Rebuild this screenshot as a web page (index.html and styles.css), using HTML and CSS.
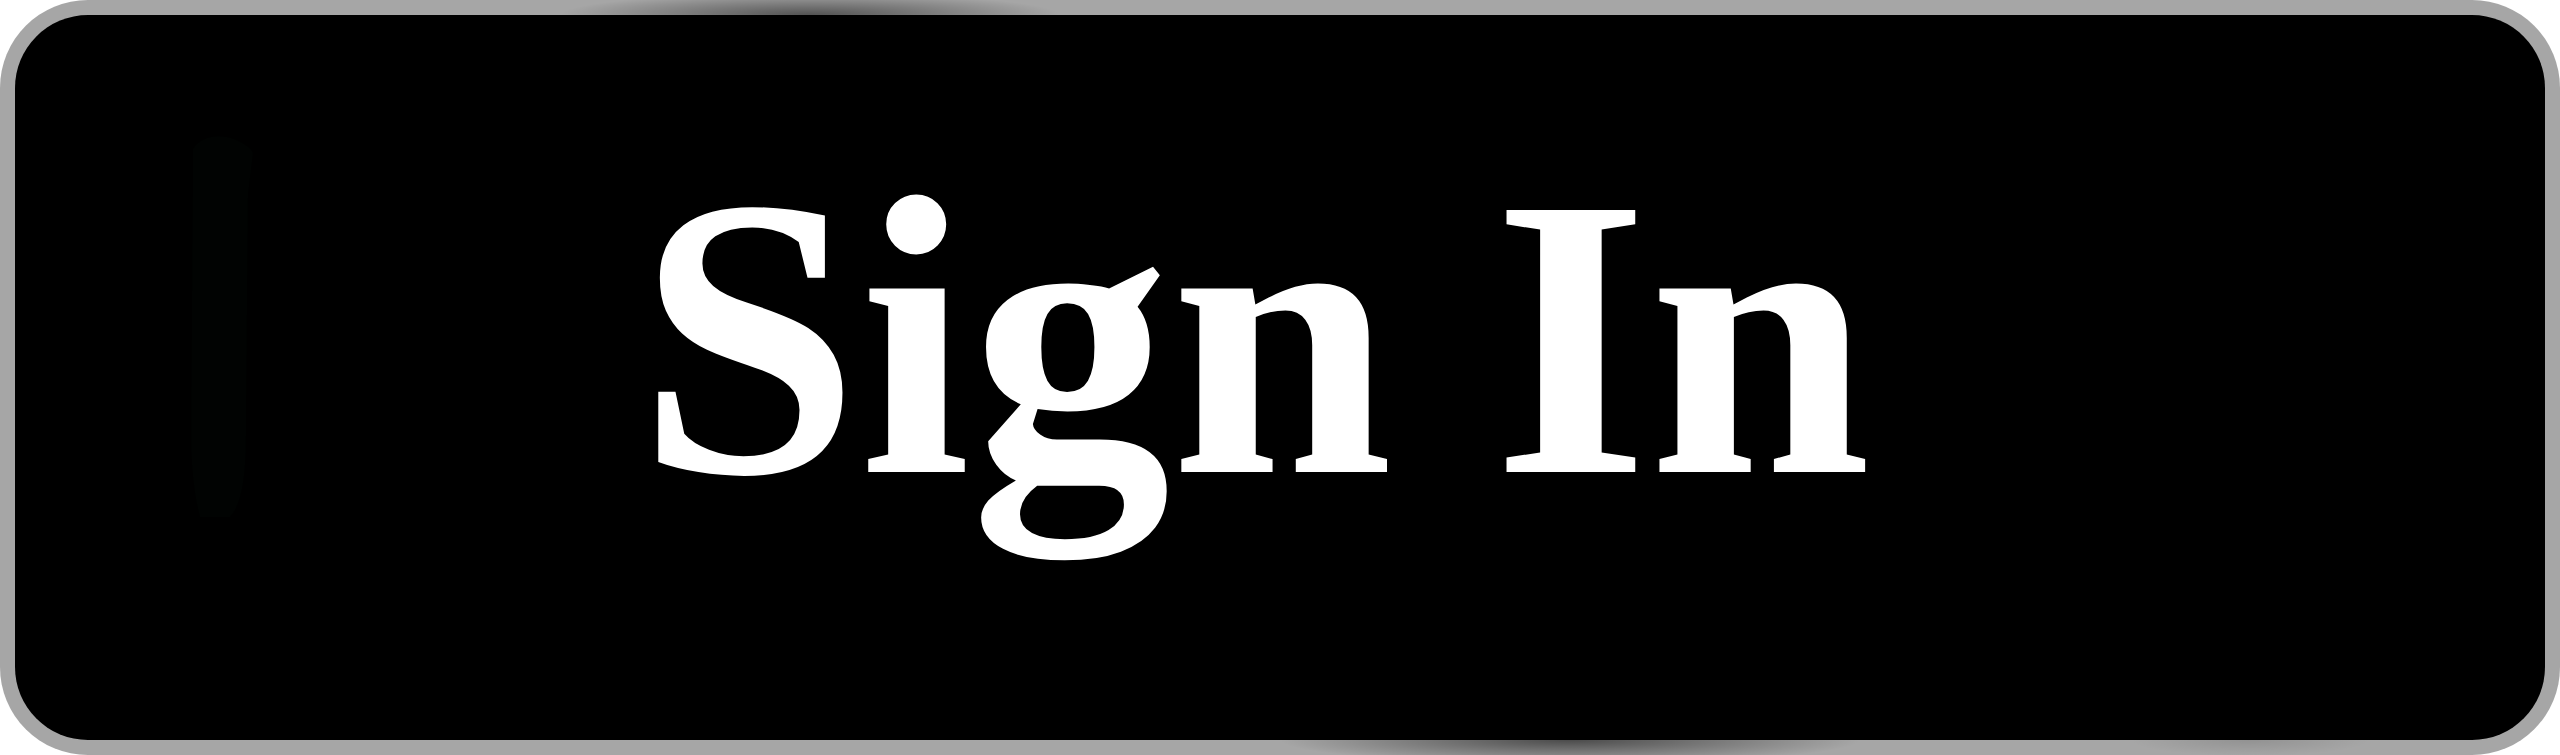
FILE: index.html
```html
<!DOCTYPE html>
<html lang="en">
<head>
<meta charset="utf-8">
<title>Sign In</title>
<link rel="stylesheet" href="styles.css">
</head>
<body>
<div class="badge">
  <div class="face">
    <svg class="logo" width="64" height="384" viewBox="0 0 64 384" aria-hidden="true">
      <path d="M3 14 C10 2 28 -2 44 4 C54 8 62 14 63 18 L58 60 L56 300 C56 340 52 370 40 382 L10 382 C4 360 1 330 1 300 Z" fill="#010302"/>
    </svg>
    <span class="label">Sign In</span>
  </div>
</div>
</body>
</html>
```

FILE: styles.css
```css
html, body {
  margin: 0;
  padding: 0;
  background: #ffffff;
}

.badge {
  width: 2560px;
  height: 755px;
  box-sizing: border-box;
  padding: 15px;
  border-radius: 88px;
  background:
    radial-gradient(ellipse 250px 22px at 810px 15px, rgba(0,0,0,0.5), rgba(0,0,0,0) 100%),
    radial-gradient(ellipse 290px 24px at 1570px 740px, rgba(0,0,0,0.55), rgba(0,0,0,0) 100%),
    radial-gradient(ellipse 120px 16px at 2250px 740px, rgba(0,0,0,0.12), rgba(0,0,0,0) 100%),
    #a6a6a6;
}

.face {
  height: 100%;
  box-sizing: border-box;
  border-radius: 73px;
  background: #000000;
  display: flex;
  align-items: flex-start;
  padding-left: 175px;
  overflow: hidden;
}

.logo {
  flex: none;
  margin-top: 120px;
}

.label {
  margin-top: 123px;
  margin-left: 383px;
  font-family: "Liberation Serif", "Times New Roman", Times, serif;
  font-weight: 700;
  font-size: 400px;
  line-height: 400px;
  color: #ffffff;
  white-space: nowrap;
}
```
